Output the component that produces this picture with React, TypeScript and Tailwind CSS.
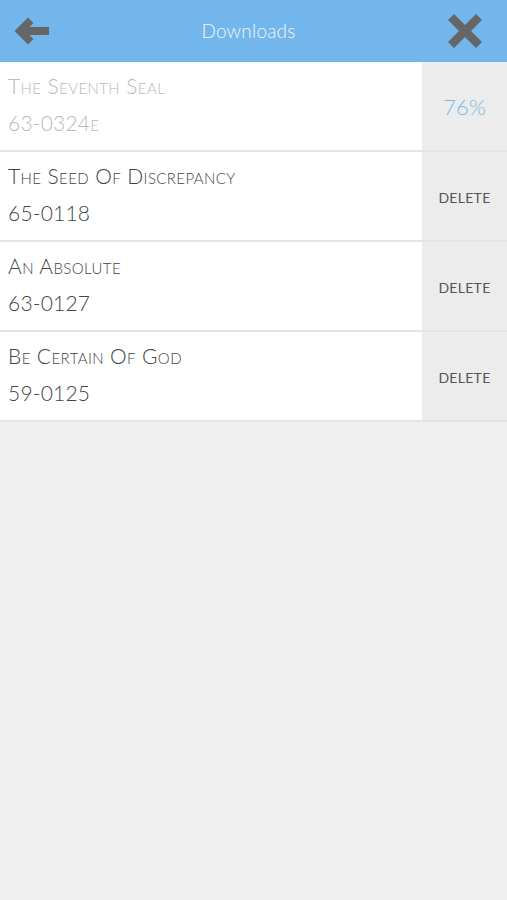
const downloads = [
  { title: "The Seventh Seal", code: "63-0324", suffix: "e", progress: 76 },
  { title: "The Seed Of Discrepancy", code: "65-0118" },
  { title: "An Absolute", code: "63-0127" },
  { title: "Be Certain Of God", code: "59-0125" },
];

function BackArrow() {
  return (
    <svg width="36" height="30" viewBox="0 0 36 30" className="text-[#666666]">
      <path d="M14 1.5 L19.5 7 L15.5 11 H35 V19 H15.5 L19.5 23 L14 28.5 L0.5 15 Z" fill="currentColor" />
    </svg>
  );
}

function CloseX() {
  return (
    <svg width="36" height="36" viewBox="0 0 36 36" className="text-[#666666]">
      <path d="M1 7 L7 1 L18 12 L29 1 L35 7 L24 18 L35 29 L29 35 L18 24 L7 35 L1 29 L12 18 Z" fill="currentColor" />
    </svg>
  );
}

export default function App() {
  return (
    <div className="min-h-[900px] bg-[#f0f0f0] font-['Lato','Open_Sans',sans-serif]">
      <header className="flex h-[62px] items-center justify-between bg-[#72b6eb] pl-[14px] pr-[24px]">
        <button className="flex w-[40px] items-center">
          <BackArrow />
        </button>
        <h1 className="text-[19px] font-light tracking-[0.2px] text-[#f2f7fc]">Downloads</h1>
        <button className="flex w-[40px] justify-end">
          <CloseX />
        </button>
      </header>

      <ul>
        {downloads.map((d) => {
          const pending = d.progress !== undefined;
          return (
            <li key={d.code} className="flex h-[90px] border-b-2 border-[#e4e4e4]">
              <div
                className={`flex flex-1 flex-col bg-white pl-[8px] pt-[12px] font-light ${
                  pending ? "text-[#b9b9b9]" : "text-[#444444]"
                }`}
              >
                <div className="text-[21px] leading-[24px] tracking-[0.4px] [font-variant:small-caps]">{d.title}</div>
                <div className="mt-[11px] text-[21px] leading-[28px] tracking-[0.2px]">
                  {d.code}
                  {d.suffix && <span className="[font-variant:small-caps]">{d.suffix}</span>}
                </div>
              </div>
              <div className="flex w-[85px] items-center justify-center bg-[#ececec]">
                {pending ? (
                  <span className="text-[22px] font-light text-[#7ab8e6]">{d.progress}%</span>
                ) : (
                  <span className="mt-[2px] text-[14px] tracking-[0.3px] text-[#555555]">DELETE</span>
                )}
              </div>
            </li>
          );
        })}
      </ul>
    </div>
  );
}
